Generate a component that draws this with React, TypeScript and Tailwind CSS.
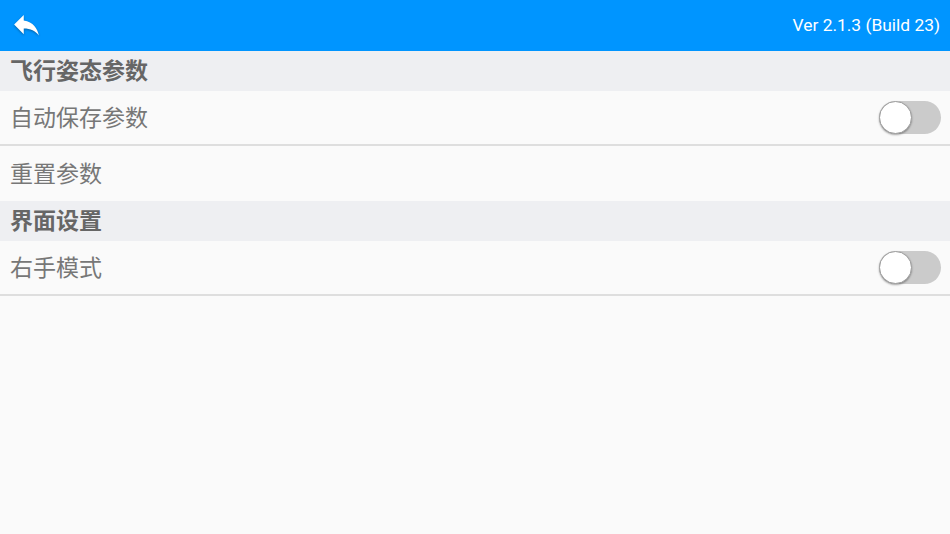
import React from "react";

function Toggle() {
  return (
    <div className="relative w-[62px] h-[33px] rounded-full bg-[#cbcbcb]">
      <div className="absolute left-0 top-0 w-[33px] h-[33px] rounded-full bg-white border border-[#9e9e9e] shadow-[0_1px_2px_rgba(0,0,0,0.35)]" />
    </div>
  );
}

function Section({ title }: { title: string }) {
  return (
    <div className="h-[40px] bg-[#eeeff2] flex items-center pl-[10px] pt-[2px] text-[23px] font-bold text-[#666666]">
      {title}
    </div>
  );
}

function Row({ label, toggle, border }: { label: string; toggle?: boolean; border?: boolean }) {
  return (
    <div
      className={
        "h-[55px] flex items-center justify-between pl-[10px] pr-[9px] text-[23px] text-[#777777] " +
        (border ? "border-b-2 border-[#dedede]" : "")
      }
    >
      <span className="pt-[3px]">{label}</span>
      {toggle ? <Toggle /> : null}
    </div>
  );
}

export default function App() {
  return (
    <div
      className="w-[950px] h-[534px] bg-[#fafafa] overflow-hidden"
      style={{ fontFamily: 'Roboto, "Noto Sans CJK SC", sans-serif' }}
    >
      <div className="h-[51px] bg-[#0095ff] flex items-center justify-between pl-[10px] pr-[10px]">
        <svg width="33" height="33" viewBox="0 0 24 24" className="drop-shadow-[0_1px_1px_rgba(0,0,0,0.35)] -mt-[2px]">
          <path fill="#ffffff" d="M10 9V5l-7 7 7 7v-4.1c5 0 8.5 1.6 11 5.1-1-5-4-10-11-11z" />
        </svg>
        <span className="text-white text-[17.4px]">Ver 2.1.3 (Build 23)</span>
      </div>
      <Section title="飞行姿态参数" />
      <Row label="自动保存参数" toggle border />
      <Row label="重置参数" />
      <Section title="界面设置" />
      <Row label="右手模式" toggle border />
    </div>
  );
}
